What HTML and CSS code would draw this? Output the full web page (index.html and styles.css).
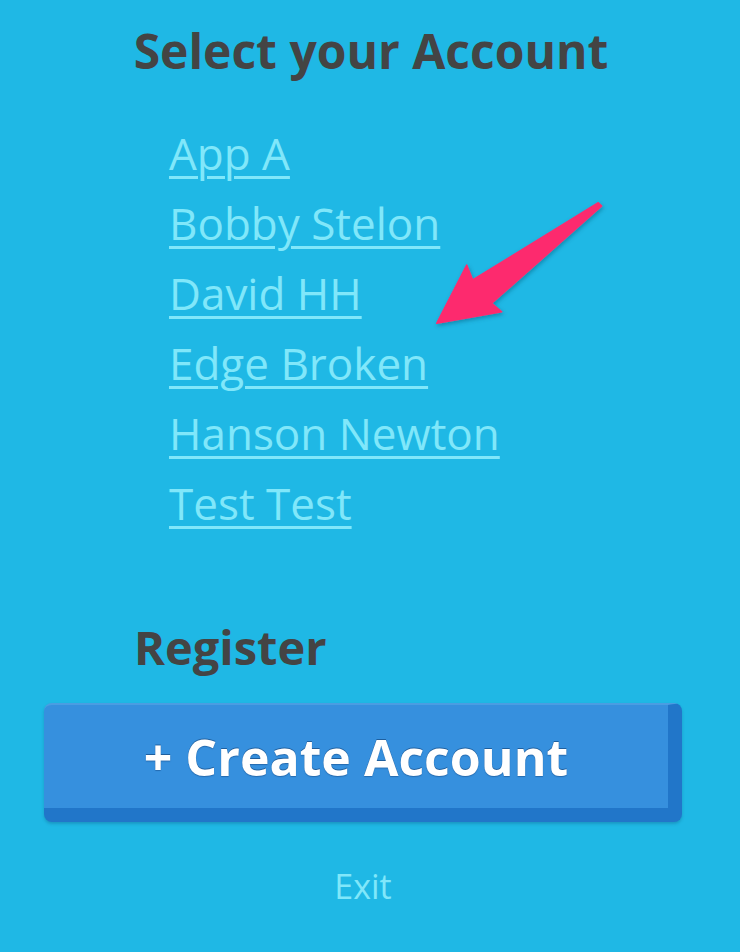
FILE: index.html
```html
<!DOCTYPE html>
<html>
<head>
<meta charset="utf-8">
<link rel="stylesheet" href="styles.css">
</head>
<body>
<div class="page">
  <h1 class="title">Select your Account</h1>
  <ul class="accounts">
    <li><a href="#">App A</a></li>
    <li><a href="#">Bobby Stelon</a></li>
    <li><a href="#">David HH</a></li>
    <li><a href="#">Edge Broken</a></li>
    <li><a href="#">Hanson Newton</a></li>
    <li><a href="#">Test Test</a></li>
  </ul>
  <h2 class="register">Register</h2>
  <button class="create">+ Create Account</button>
  <a class="exit" href="#">Exit</a>
</div>
<svg class="arrow" width="740" height="952" viewBox="0 0 740 952">
  <defs>
    <filter id="sh" x="-20%" y="-20%" width="140%" height="140%">
      <feDropShadow dx="1" dy="2" stdDeviation="2" flood-color="#0a4d6e" flood-opacity="0.45"/>
    </filter>
  </defs>
  <polygon filter="url(#sh)" fill="#fd2a6e" stroke="#fd2a6e" stroke-width="1.5" stroke-linejoin="round"
    points="598.3,202.7 601.7,206 491.7,303.3 501.7,311.7 436.7,323.3 466.7,265 472.7,280"/>
</svg>
</body>
</html>
```
FILE: styles.css
```css
html, body {
  margin: 0;
  padding: 0;
}
body {
  background: #1fb8e5;
  font-family: "Open Sans", "Noto Sans", sans-serif;
  width: 740px;
  height: 952px;
  overflow: hidden;
  position: relative;
}
.page {
  padding: 21px 58px 0 44px;
  display: flex;
  flex-direction: column;
}
.title {
  margin: 0;
  font-size: 48px;
  line-height: 60px;
  font-weight: 700;
  color: #444444;
  text-align: center;
  padding-left: 16px;
}
.accounts {
  list-style: none;
  margin: 37px 0 0 0;
  padding: 0 0 0 125px;
}
.accounts li {
  font-size: 44px;
  line-height: 70px;
}
.accounts a {
  color: #80e7fa;
  text-decoration: underline;
  text-decoration-thickness: 3px;
  text-underline-offset: 6px;
}
.register {
  margin: 79px 0 0 90px;
  font-size: 47px;
  line-height: 60px;
  font-weight: 700;
  color: #444444;
}
.create {
  margin-top: 26px;
  width: 638px;
  height: 119px;
  border: none;
  border-radius: 8px;
  background: #3690de;
  border-top: 2px solid #4a9de2;
  border-right: 14px solid #2176c9;
  border-bottom: 14px solid #2176c9;
  box-shadow: 0 2px 3px rgba(10, 60, 100, 0.25);
  color: #ffffff;
  font-family: "Open Sans", "Noto Sans", sans-serif;
  font-weight: 700;
  font-size: 50px;
  padding: 0 0 0 0;
  text-shadow: 0 -1px 0 #1f5f9e, 0 1px 1px rgba(20, 70, 130, 0.5);
}
.exit {
  margin-top: 44px;
  align-self: center;
  color: #80e7fa;
  font-size: 34px;
  line-height: 40px;
  text-decoration: none;
}
.arrow {
  position: absolute;
  left: 0;
  top: 0;
  pointer-events: none;
}
```
